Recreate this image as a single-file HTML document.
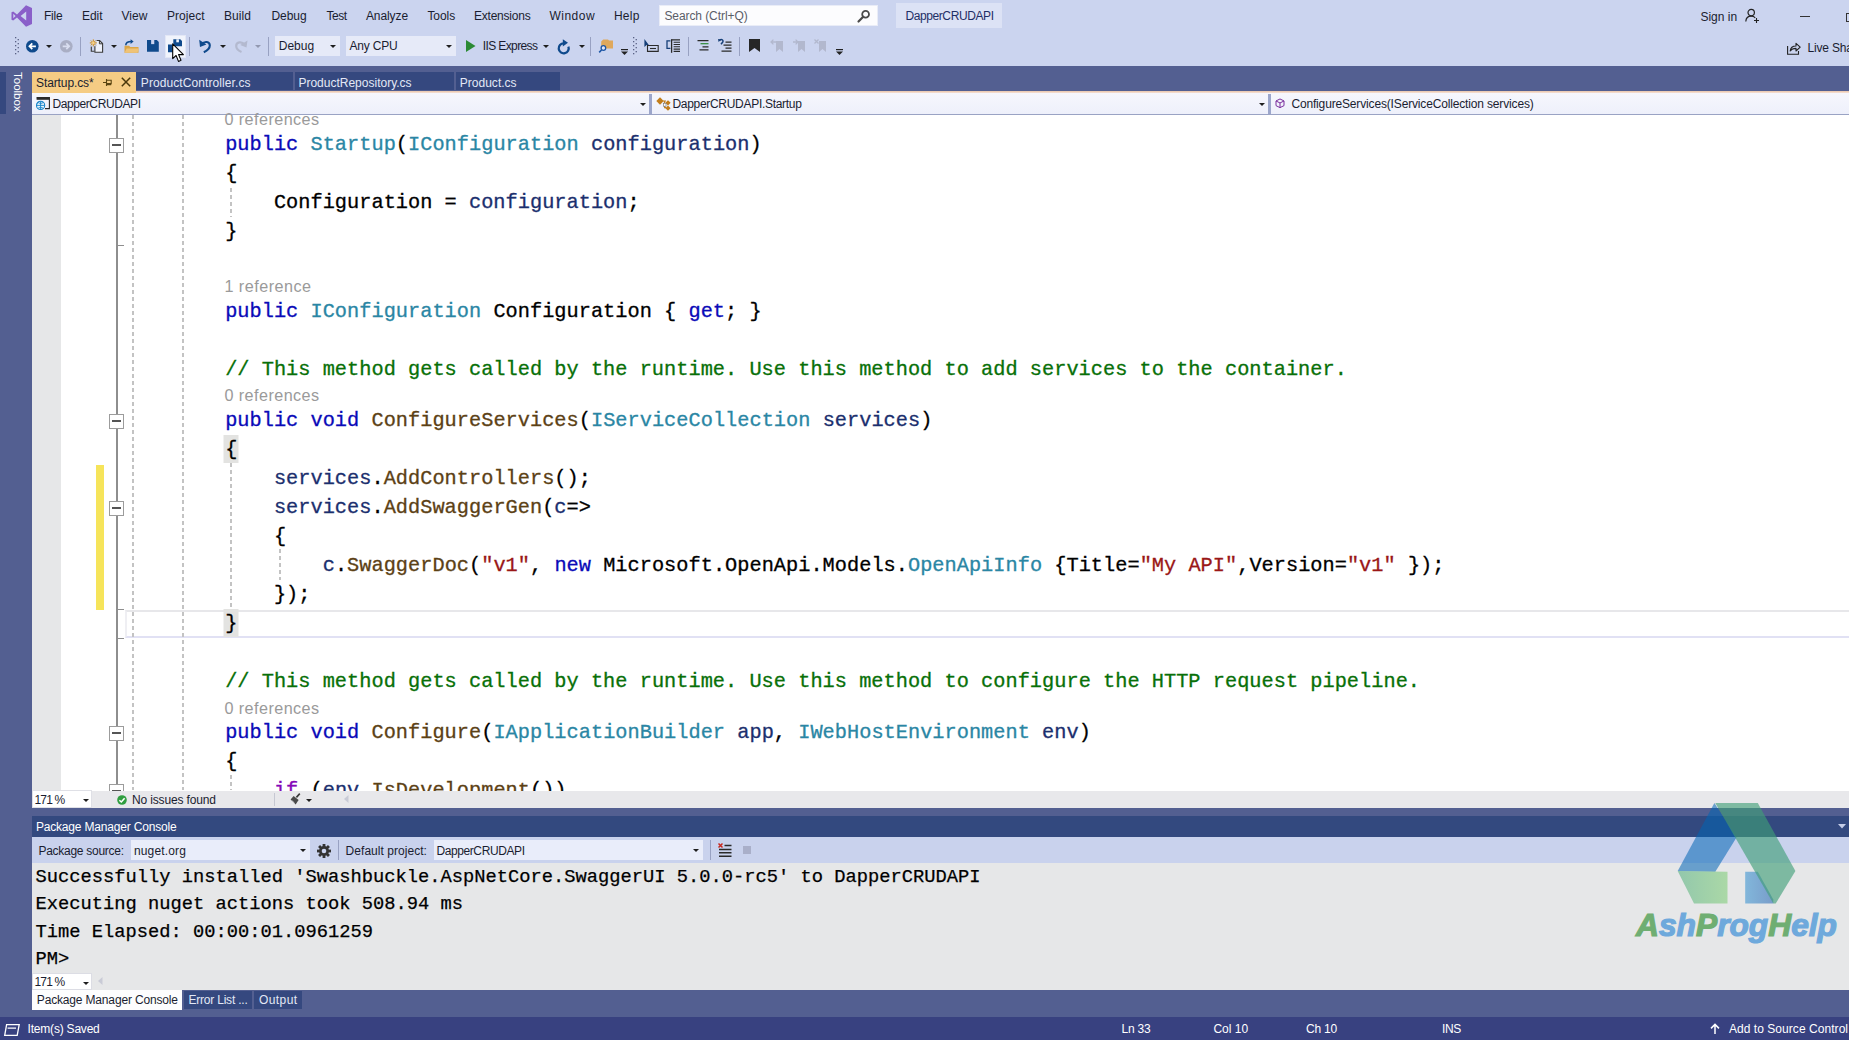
<!DOCTYPE html>
<html lang="en">
<head>
<meta charset="utf-8">
<title>DapperCRUDAPI - Microsoft Visual Studio</title>
<style>
*{box-sizing:border-box;margin:0;padding:0}
html,body{width:1849px;height:1040px;overflow:hidden;background:#535f91}
body{position:relative;font-family:"Liberation Sans",sans-serif;font-size:12px;color:#1e1e1e}
.a,.t,.code,.con{position:absolute}
.t{white-space:pre;line-height:16px;height:16px}
svg{position:absolute;overflow:visible}
#chrome{left:0;top:0;width:1849px;height:66px;background:#cbd4ef}
#search{left:659px;top:5px;width:219px;height:21px;background:#fcfcfe;border:1px solid #e9ecf7}
#sln{left:896px;top:3px;width:106px;height:25px;background:#dce2f5}
.combo{top:36px;height:20px;background:#e6eaf8}
.sep{width:1px;background:#98a1c2}
.arr{width:0;height:0;border-left:3px solid transparent;border-right:3px solid transparent;border-top:3px solid #1e1e1e}
#tabs{left:0;top:66px;width:1849px;height:25px;background:#535f91}
.tab{top:72px;height:18px;background:#35487f}
#nav{left:32px;top:93px;width:1817px;height:22px;background:linear-gradient(#f6f7fd,#eef0fb);border-bottom:1px solid #9aa3c4}
#editor{left:32px;top:115px;width:1817px;height:676px;background:#fff;overflow:hidden}
#gutter{left:0;top:0;width:29px;height:675px;background:#e6e7e8}
.code{white-space:pre;font-family:"Liberation Mono",monospace;font-size:20.3px;line-height:29px;height:29px;color:#000;-webkit-text-stroke:0.3px currentColor}
.con{white-space:pre;font-family:"Liberation Mono",monospace;font-size:18.75px;line-height:27px;height:27px;color:#000;-webkit-text-stroke:0.25px currentColor}
.k{color:#0a0ab8}.ty{color:#2a86a4}.m{color:#5c4115}.p{color:#1b2f6e}.c{color:#087008}.s{color:#9a1717}.ck{color:#8508b8}
.br{display:inline-block;height:28px;vertical-align:top;background:#e3e3e1;box-shadow:-1.5px 0 0 #e3e3e1,1.5px 0 0 #e3e3e1}
.guide{width:1.6px;background:repeating-linear-gradient(#c3c3c3 0,#c3c3c3 4px,transparent 4px,transparent 7px)}
.fold{width:15px;height:15px;border:1px solid #9c9c9c;background:#fff}
.fold:after{content:"";position:absolute;left:2px;top:5.5px;width:9px;height:2px;background:#555}
.tick{height:1.4px;width:7px;background:#8e8e8e}
</style>
</head>
<body>

<div class="a" id="chrome"></div>
<svg style="left:11px;top:5px" width="21" height="22" viewBox="0 0 21 22"><path fill="#8a5fc9" fill-rule="evenodd" d="M15 0.3 L21 3 V19 L15 21.7 L6 12.6 L2.2 15.6 L0.5 14.7 V7.3 L2.2 6.4 L6 9.4 Z M15.2 6.6 L9.6 11 L15.2 15.4 Z M2.3 8.8 V13.2 L4.6 11 Z"/></svg>
<div class="a" id="search"></div>
<svg style="left:857px;top:9px" width="14" height="14" viewBox="0 0 14 14"><circle cx="8.6" cy="5.2" r="3.4" fill="none" stroke="#4a4a4a" stroke-width="1.8"/><path d="M6.2 7.8 L1.5 12.5" stroke="#4a4a4a" stroke-width="2.2" stroke-linecap="round"/></svg>
<div class="a" id="sln"></div>
<svg style="left:1745px;top:8px" width="16" height="16" viewBox="0 0 16 16"><circle cx="6.2" cy="4.6" r="3.2" fill="none" stroke="#222" stroke-width="1.2"/><path d="M0.8 13.5 C1 9.5 3.5 8.2 6.2 8.2 C8 8.2 9.4 8.8 10.2 9.8" fill="none" stroke="#222" stroke-width="1.2"/><path d="M9 12.5 H14 M11.5 10 V15" stroke="#222" stroke-width="1.1"/></svg>
<div class="a" style="left:1800px;top:16px;width:10px;height:1px;background:#333"></div>
<div class="a" style="left:1846px;top:13px;width:8px;height:9px;border:1px solid #333"></div>
<svg style="left:1787px;top:42px" width="14" height="13" viewBox="0 0 14 13"><path d="M0.6 4 V12.3 H11.5 V9" fill="none" stroke="#222" stroke-width="1.1"/><path d="M3.2 9 C3.6 5.6 6 4 9 4 V1.4 L13.2 5.2 L9 9 V6.4 C6.6 6.4 4.6 7 3.2 9 Z" fill="none" stroke="#222" stroke-width="1.1" stroke-linejoin="round"/></svg>
<svg style="left:14.5px;top:37px" width="5" height="18" viewBox="0 0 5 18" fill="#596184"><rect x="0" y="0.0" width="1.3" height="1.3"/><rect x="2.6" y="2.0" width="1.3" height="1.3"/><rect x="0" y="4.0" width="1.3" height="1.3"/><rect x="2.6" y="6.0" width="1.3" height="1.3"/><rect x="0" y="8.0" width="1.3" height="1.3"/><rect x="2.6" y="10.0" width="1.3" height="1.3"/><rect x="0" y="12.0" width="1.3" height="1.3"/><rect x="2.6" y="14.0" width="1.3" height="1.3"/><rect x="0" y="16.0" width="1.3" height="1.3"/></svg>
<svg style="left:25.7px;top:40px" width="12.6" height="12.6" viewBox="0 0 14 14"><circle cx="7" cy="7" r="7" fill="#0f4a8c"/><path d="M11 7 H4.2 M7 3.8 L3.8 7 L7 10.2" fill="none" stroke="#fff" stroke-width="1.9"/></svg>
<div class="a arr" style="left:46px;top:45px"></div>
<svg style="left:59.7px;top:40px" width="12.6" height="12.6" viewBox="0 0 14 14"><circle cx="7" cy="7" r="7" fill="#a9aec4"/><path d="M3 7 H9.8 M7 3.8 L10.2 7 L7 10.2" fill="none" stroke="#d9def0" stroke-width="1.9"/></svg>
<div class="a sep" style="left:80px;top:37px;height:19px"></div>
<svg style="left:89px;top:39px" width="15" height="14" viewBox="0 0 15 14"><path d="M2.3 7.5 V12.3 H5.6" fill="none" stroke="#3a3a3a" stroke-width="1.1"/><path d="M5.9 1.5 H10.6 L13.6 4.5 V13.3 H5.9 Z" fill="#eef1fb" stroke="#3a3a3a" stroke-width="1.1"/><path d="M10.4 1.6 V4.8 H13.5" fill="none" stroke="#3a3a3a" stroke-width="1"/><rect x="1.2" y="0.6" width="6.4" height="6.6" fill="#cbd4ef"/><path d="M4.3 0.4 V7.4 M0.8 3.9 H7.8 M1.9 1.5 L6.7 6.3 M6.7 1.5 L1.9 6.3" stroke="#d58d12" stroke-width="1"/><circle cx="4.3" cy="3.9" r="1.3" fill="#f7d48a"/></svg>
<div class="a arr" style="left:111.3px;top:45px"></div>
<svg style="left:123.5px;top:38.5px" width="15" height="14" viewBox="0 0 15 14"><path d="M0.5 6.8 H5 L6.3 8 H14.5 V13.8 H0.5 Z" fill="#dca646"/><path d="M0.5 13.8 L2.6 9.6 H15 L13.4 13.8 Z" fill="#efc377"/><path d="M1.8 6.3 C1.8 3.4 4 2.6 7.6 2.6" fill="none" stroke="#0f4a8c" stroke-width="1.5"/><path d="M6.6 0.3 L9.6 2.6 L6.6 4.9 Z" fill="#0f4a8c"/></svg>
<svg style="left:147.4px;top:40px" width="11.8" height="11.8" viewBox="0 0 12 12"><path d="M0 0 H10 L12 2 V12 H0 Z" fill="#0f4a8c"/><rect x="4.2" y="0" width="3.2" height="4.2" fill="#cbd4ef"/></svg>
<div class="a" style="left:164.7px;top:34.5px;width:21.3px;height:23px;background:#f1f4fc;border:1px solid #e3e7f6"></div>
<svg style="left:168px;top:39px" width="15" height="14" viewBox="0 0 15 14"><path d="M5.3 0.3 H12.3 L14 2 V7.3 H5.3 Z" fill="#0f4a8c"/><rect x="8.3" y="0.3" width="2.6" height="3" fill="#f1f4fc"/><path d="M0 5.6 H4.4 V8.6 H6 V13.3 H0 Z" fill="#0f4a8c"/></svg>
<div class="a sep" style="left:189px;top:37px;height:19px"></div>
<svg style="left:198.5px;top:38.6px" width="13" height="14" viewBox="0 0 13 14"><path d="M3 5.2 C5.4 1.8 10.8 2.4 10.8 6.6 C10.8 9.6 8.4 11.6 4.8 13.2" fill="none" stroke="#0f4a8c" stroke-width="2.1"/><path d="M0.2 0.8 L1 8 L7.4 5.4 Z" fill="#0f4a8c"/></svg>
<div class="a arr" style="left:220.2px;top:45px"></div>
<svg style="left:233px;top:39px" width="15" height="14" viewBox="0 0 15 14"><path d="M11.5 5.5 C9 2.2 3.2 2.6 3.2 7 C3.2 9.8 5.4 11.6 8.5 13" fill="none" stroke="#b3b9cf" stroke-width="2.2"/><path d="M14.5 1.5 L13.5 8.5 L7.2 6 Z" fill="#b3b9cf"/></svg>
<div class="a arr" style="left:255.2px;top:45px;border-top-color:#9298b0"></div>
<div class="a sep" style="left:267.5px;top:37px;height:19px"></div>
<div class="a combo" style="left:275px;width:65px"></div>
<div class="a arr" style="left:330px;top:45px"></div>
<div class="a combo" style="left:346px;width:110px"></div>
<div class="a arr" style="left:446px;top:45px"></div>
<svg style="left:466px;top:40px" width="10" height="12" viewBox="0 0 10 12"><path d="M0 0 L9.5 6 L0 12 Z" fill="#2b8a34"/></svg>
<div class="a arr" style="left:542.5px;top:45px"></div>
<svg style="left:557px;top:38px" width="14" height="17" viewBox="0 0 14 17"><path d="M6.7 5.3 A5 5 0 1 0 11.4 8.6" fill="none" stroke="#0f4a8c" stroke-width="2.3"/><path d="M5.8 1.2 L11 4.8 L5.8 8.6 Z" fill="#0f4a8c"/></svg>
<div class="a arr" style="left:578.5px;top:45px"></div>
<div class="a sep" style="left:590px;top:37px;height:19px"></div>
<svg style="left:598px;top:38px" width="16" height="15" viewBox="0 0 16 15"><path d="M5.2 1.4 H10 L11 2.6 H15 V10.4 H3.2 V3.4 Z" fill="#dfa85c"/><circle cx="5.4" cy="10" r="2.3" fill="#dfe6f8" stroke="#1b55a5" stroke-width="1.3"/><path d="M3.7 11.8 L1.2 14.4" stroke="#1b55a5" stroke-width="1.6"/></svg>
<svg style="left:620.5px;top:48.5px" width="7" height="6" viewBox="0 0 7 6"><rect x="0" y="0" width="7" height="1.2" fill="#222"/><path d="M0 2.6 H7 L3.5 6 Z" fill="#222"/></svg>
<svg style="left:632.6px;top:37px" width="5" height="18" viewBox="0 0 5 18" fill="#596184"><rect x="0" y="0.0" width="1.3" height="1.3"/><rect x="2.6" y="2.0" width="1.3" height="1.3"/><rect x="0" y="4.0" width="1.3" height="1.3"/><rect x="2.6" y="6.0" width="1.3" height="1.3"/><rect x="0" y="8.0" width="1.3" height="1.3"/><rect x="2.6" y="10.0" width="1.3" height="1.3"/><rect x="0" y="12.0" width="1.3" height="1.3"/><rect x="2.6" y="14.0" width="1.3" height="1.3"/><rect x="0" y="16.0" width="1.3" height="1.3"/></svg>
<svg style="left:644px;top:39px" width="15" height="13" viewBox="0 0 15 13"><path d="M0.4 0 L0.4 8 L2.6 6 L5 6.3 Z" fill="#163f78"/><path d="M3.5 6.5 H14.2 V12.4 H3.5 Z" fill="none" stroke="#2a2a2a" stroke-width="1.1"/><path d="M6 9.5 H12" stroke="#2a2a2a" stroke-width="1.1"/></svg>
<svg style="left:666px;top:39px" width="15" height="14" viewBox="0 0 15 14"><path d="M4.4 1.8 H1 V9.4 H4.4" fill="none" stroke="#163f78" stroke-width="1.3"/><path d="M5.6 0.2 V13.8" stroke="#2a2a2a" stroke-width="1.3"/><path d="M5.6 0.9 H14 M7.6 3.2 H14 M7.6 5.5 H14 M7.6 7.8 H14 M7.6 10.1 H14 M7.6 12.4 H14" stroke="#2a2a2a" stroke-width="1.1"/></svg>
<div class="a sep" style="left:688px;top:37px;height:19px"></div>
<svg style="left:697px;top:40px" width="12" height="11" viewBox="0 0 12 11"><path d="M0.5 0.6 H11.5 M5.5 6.8 H11.5 M2.5 9.9 H11.5" stroke="#2a2a2a" stroke-width="1.2"/><path d="M3.5 3.7 H11.5" stroke="#2b8a34" stroke-width="1.2"/></svg>
<svg style="left:718px;top:39px" width="14" height="13" viewBox="0 0 14 13"><path d="M1.5 1.5 C3.5 -0.5 6 1.2 4.6 3.2 L3 5.2" fill="none" stroke="#163f78" stroke-width="1.5"/><path d="M0 0 L3.2 0.4 L0.6 3 Z" fill="#163f78"/><path d="M7.5 3.2 H13.5 M5.5 6.2 H13.5 M7.5 9.2 H13.5 M3.5 12.2 H13.5" stroke="#2a2a2a" stroke-width="1.2"/></svg>
<div class="a sep" style="left:739.3px;top:37px;height:19px"></div>
<svg style="left:749px;top:39px" width="11" height="13" viewBox="0 0 11 13"><path d="M0 0 H11 V13 L5.5 9 L0 13 Z" fill="#262626"/></svg>
<svg style="left:771px;top:39px" width="13" height="13" viewBox="0 0 13 13"><path d="M5 2 H12 V13 L8.5 10 L5 13 Z" fill="#b2b8ce"/><path d="M0 3 H5 M2.4 0.6 L0 3 L2.4 5.4" stroke="#b2b8ce" stroke-width="1.3" fill="none"/></svg>
<svg style="left:793px;top:39px" width="13" height="13" viewBox="0 0 13 13"><path d="M5 2 H12 V13 L8.5 10 L5 13 Z" fill="#b2b8ce"/><path d="M0 3 H5 M2.6 0.6 L5 3 L2.6 5.4" stroke="#b2b8ce" stroke-width="1.3" fill="none"/></svg>
<svg style="left:814px;top:39px" width="13" height="13" viewBox="0 0 13 13"><path d="M5 2 H12 V13 L8.5 10 L5 13 Z" fill="#b2b8ce"/><path d="M0.5 0.5 L4.5 4.5 M4.5 0.5 L0.5 4.5" stroke="#b2b8ce" stroke-width="1.3" fill="none"/></svg>
<svg style="left:835.5px;top:48.5px" width="7" height="6" viewBox="0 0 7 6"><rect x="0" y="0" width="7" height="1.2" fill="#222"/><path d="M0 2.6 H7 L3.5 6 Z" fill="#222"/></svg>
<div class="a" id="tabs"></div>
<div class="a" style="left:32px;top:90.5px;width:1817px;height:3.5px;background:linear-gradient(#e9c4a8,#f3ddd0 55%,#f5eeeb)"></div>
<div class="a" style="left:32px;top:72px;width:104px;height:21px;background:#f5cc84"></div>
<div class="a tab" style="left:136px;width:157px"></div>
<div class="a tab" style="left:295px;width:159px"></div>
<div class="a tab" style="left:456px;width:103.5px"></div>
<svg style="left:103px;top:78px" width="9" height="9" viewBox="0 0 9 9"><path d="M0 4.5 H3.5 M3.5 1 V8 M3.5 2.2 H8.2 V5.6 H3.5 M3.5 6.6 H8.2" fill="none" stroke="#5a4410" stroke-width="1.1"/></svg>
<svg style="left:121px;top:77px" width="10" height="10" viewBox="0 0 10 10"><path d="M0.8 0.8 L9.2 9.2 M9.2 0.8 L0.8 9.2" stroke="#4a380c" stroke-width="1.5"/></svg>
<div class="a" style="left:0;top:72px;width:6px;height:42px;background:#35487f"></div>
<div class="a" style="left:9.5px;top:72px;width:16px;height:44px;writing-mode:vertical-rl;color:#fff;font-size:11.6px;line-height:16px;white-space:pre;letter-spacing:-0.05px">Toolbox</div>
<div class="a" id="nav"></div>
<div class="a" style="left:649px;top:94px;width:2.8px;height:20px;background:#9ca6cb"></div>
<div class="a" style="left:1268.2px;top:94px;width:2.8px;height:20px;background:#9ca6cb"></div>
<div class="a arr" style="left:640px;top:103px"></div>
<div class="a arr" style="left:1259px;top:103px"></div>
<svg style="left:36px;top:97px" width="14" height="13" viewBox="0 0 14 13"><path d="M0.6 0.6 H13.4 V11.6 H9" fill="none" stroke="#2a2a2a" stroke-width="1.1"/><rect x="0.6" y="0.6" width="12.8" height="2.2" fill="#2a2a2a"/><circle cx="4.6" cy="8.4" r="4.1" fill="#e8f4fc" stroke="#1583c9" stroke-width="1.1"/><path d="M0.6 8.4 H8.6 M4.6 4.4 V12.4 M2.2 5.6 C3.6 6.6 5.6 6.6 7 5.6 M2.2 11.2 C3.6 10.2 5.6 10.2 7 11.2" fill="none" stroke="#1583c9" stroke-width="0.9"/></svg>
<svg style="left:656px;top:97px" width="15" height="14" viewBox="0 0 15 14"><path d="M4 0.3 L7.7 4 L4 7.7 L0.3 4 Z" fill="#c27d1a"/><path d="M7 4 H10 M8.6 4 V10.6 H10" fill="none" stroke="#c27d1a" stroke-width="1.1"/><path d="M12 3.2 L14.6 5.8 L12 8.4 L9.4 5.8 Z M12 8.6 L14.6 11.2 L12 13.8 L9.4 11.2 Z" fill="#c27d1a"/><rect x="7.4" y="6.2" width="2.6" height="3" fill="#fff" stroke="#6a6a6a" stroke-width="0.6"/></svg>
<svg style="left:1274.6px;top:97.6px" width="10" height="10.6" viewBox="0 0 12 12"><path d="M6 0.8 L10.8 3.2 V8.8 L6 11.2 L1.2 8.8 V3.2 Z M1.2 3.2 L6 5.6 L10.8 3.2 M6 5.6 V11.2" fill="none" stroke="#7b2f9e" stroke-width="1.2" stroke-linejoin="round"/></svg>
<div class="a" id="editor"><div class="a" id="gutter"></div></div>
<div class="a" style="left:125px;top:609.5px;width:1730px;height:28px;border-top:2px solid #e7e7ea;border-bottom:2.4px solid #e1e1f4;border-left:2px solid #efeff3"></div>
<div class="a" style="left:96px;top:465px;width:8px;height:144.7px;background:#f6e45a"></div>
<div class="a" style="left:116px;top:115px;width:1.6px;height:675px;background:#8e8e8e"></div>
<div class="a guide" style="left:132px;top:115px;height:675px"></div>
<div class="a guide" style="left:182px;top:115px;height:675px"></div>
<div class="a guide" style="left:230px;top:188px;height:29px"></div>
<div class="a guide" style="left:230px;top:463px;height:146px"></div>
<div class="a guide" style="left:279px;top:549px;height:31px"></div>
<div class="a guide" style="left:230px;top:775px;height:15px"></div>
<div class="a fold" style="left:109px;top:137.5px"></div>
<div class="a fold" style="left:109px;top:413.5px"></div>
<div class="a fold" style="left:109px;top:500.5px"></div>
<div class="a fold" style="left:109px;top:725.5px"></div>
<div class="a fold" style="left:109px;top:783.5px"></div>
<div class="a tick" style="left:117px;top:244.5px"></div>
<div class="a tick" style="left:117px;top:609px"></div>
<div class="a tick" style="left:117px;top:637.6px"></div>
<div class="code" id="c149" style="left:225.14px;top:130.1px;letter-spacing:0.0215px"><span class="k">public</span> <span class="ty">Startup</span>(<span class="ty">IConfiguration</span> <span class="p">configuration</span>)</div>
<div class="code" id="c178" style="left:225.14px;top:159.1px;letter-spacing:0.0211px">{</div>
<div class="code" id="c207" style="left:273.92px;top:188.1px;letter-spacing:0.0216px">Configuration = <span class="p">configuration</span>;</div>
<div class="code" id="c236" style="left:225.14px;top:217.1px;letter-spacing:0.0211px">}</div>
<div class="code" id="c316" style="left:225.14px;top:297.1px;letter-spacing:0.0218px"><span class="k">public</span> <span class="ty">IConfiguration</span> Configuration { <span class="k">get</span>; }</div>
<div class="code" id="c374" style="left:225.14px;top:355.1px;letter-spacing:0.0221px"><span class="c">// This method gets called by the runtime. Use this method to add services to the container.</span></div>
<div class="code" id="c425" style="left:225.14px;top:406.1px;letter-spacing:0.0217px"><span class="k">public</span> <span class="k">void</span> <span class="m">ConfigureServices</span>(<span class="ty">IServiceCollection</span> <span class="p">services</span>)</div>
<div class="code" id="c454" style="left:225.14px;top:435.1px;letter-spacing:0.0211px"><span class="br">{</span></div>
<div class="code" id="c483" style="left:273.92px;top:464.1px;letter-spacing:0.0217px"><span class="p">services</span>.<span class="m">AddControllers</span>();</div>
<div class="code" id="c512" style="left:273.92px;top:493.1px;letter-spacing:0.0211px"><span class="p">services</span>.<span class="m">AddSwaggerGen</span>(<span class="p">c</span>=&gt;</div>
<div class="code" id="c541" style="left:273.92px;top:522.1px;letter-spacing:0.0211px">{</div>
<div class="code" id="c570" style="left:322.69px;top:551.1px;letter-spacing:0.0213px"><span class="p">c</span>.<span class="m">SwaggerDoc</span>(<span class="s">&quot;v1&quot;</span>, <span class="k">new</span> Microsoft.OpenApi.Models.<span class="ty">OpenApiInfo</span> {Title=<span class="s">&quot;My API&quot;</span>,Version=<span class="s">&quot;v1&quot;</span> });</div>
<div class="code" id="c599" style="left:273.92px;top:580.1px;letter-spacing:0.0211px">});</div>
<div class="code" id="c628" style="left:225.14px;top:609.1px;letter-spacing:0.0211px"><span class="br">}</span></div>
<div class="code" id="c686" style="left:225.14px;top:667.1px;letter-spacing:0.0222px"><span class="c">// This method gets called by the runtime. Use this method to configure the HTTP request pipeline.</span></div>
<div class="code" id="c737" style="left:225.14px;top:718.1px;letter-spacing:0.0216px"><span class="k">public</span> <span class="k">void</span> <span class="m">Configure</span>(<span class="ty">IApplicationBuilder</span> <span class="p">app</span>, <span class="ty">IWebHostEnvironment</span> <span class="p">env</span>)</div>
<div class="code" id="c766" style="left:225.14px;top:747.1px;letter-spacing:0.0211px">{</div>
<div class="code" id="c795" style="left:273.92px;top:776.1px;letter-spacing:0.0211px"><span class="ck">if</span> (<span class="p">env</span>.<span class="m">IsDevelopment</span>())</div>
<div class="a" style="left:32px;top:790.5px;width:1817px;height:17.5px;background:#e8e8eb"></div>
<div class="a" style="left:32px;top:790px;width:60px;height:18px;background:#fff;border:1px solid #dfe0e6"></div>
<div class="a arr" style="left:83px;top:799px"></div>
<svg style="left:117px;top:795px" width="10" height="10" viewBox="0 0 10 10"><circle cx="5" cy="5" r="4.8" fill="#2f9e3f"/><path d="M2.4 5.2 L4.3 7 L7.6 3.2" fill="none" stroke="#fff" stroke-width="1.5"/></svg>
<div class="a sep" style="left:274px;top:793px;height:13px;background:#c6c8d2"></div>
<svg style="left:290px;top:793px" width="11" height="12" viewBox="0 0 11 12"><path d="M9.8 0.6 L6.4 4.4" stroke="#3a3a3a" stroke-width="1.6"/><path d="M3.6 3 L8.6 7 L5.6 11.4 L0.6 6.6 Z" fill="#4a4a4a"/><path d="M2.2 7.8 L4.6 10.2" stroke="#e9eaee" stroke-width="0.8"/></svg>
<div class="a arr" style="left:306px;top:799px"></div>
<svg style="left:344px;top:795px" width="5" height="8" viewBox="0 0 5 8"><path d="M4.5 0 V8 L0 4 Z" fill="#c9cbd6"/></svg>
<div class="a" style="left:32px;top:816px;width:1817px;height:21px;background:#33497f"></div>
<svg style="left:1838px;top:824px" width="8" height="5" viewBox="0 0 8 5"><path d="M0 0 H8 L4 4.5 Z" fill="#c5cde8"/></svg>
<div class="a" style="left:32px;top:837px;width:1817px;height:26px;background:#c9d2ed"></div>
<div class="a" style="left:130.5px;top:840px;width:179px;height:20px;background:#e9edfa"></div>
<div class="a arr" style="left:300px;top:849px"></div>
<svg style="left:317px;top:843.5px" width="14" height="14" viewBox="0 0 14 14"><g transform="translate(7,7)"><g fill="#333"><rect x="-1.4" y="-7" width="2.8" height="14" transform="rotate(0)"/><rect x="-1.4" y="-7" width="2.8" height="14" transform="rotate(45)"/><rect x="-1.4" y="-7" width="2.8" height="14" transform="rotate(90)"/><rect x="-1.4" y="-7" width="2.8" height="14" transform="rotate(135)"/></g><circle r="4.9" fill="#333"/><circle r="2.3" fill="#cbd4ef"/></g></svg>
<div class="a sep" style="left:338px;top:840px;height:20px"></div>
<div class="a" style="left:433.5px;top:840px;width:269px;height:20px;background:#e9edfa"></div>
<div class="a arr" style="left:693px;top:849px"></div>
<div class="a sep" style="left:709.5px;top:840px;height:20px"></div>
<svg style="left:718px;top:843px" width="14" height="14" viewBox="0 0 14 14"><path d="M0.5 0.5 L4.5 4.5 M4.5 0.5 L0.5 4.5" stroke="#c8281e" stroke-width="1.5"/><path d="M6.5 2.6 H13.5 M1 6.4 H13.5 M1 9.8 H13.5 M1 13.2 H13.5" stroke="#2a2a2a" stroke-width="1.5"/></svg>
<div class="a" style="left:743px;top:846px;width:8px;height:8px;background:#a9afc9"></div>
<div class="a" style="left:32px;top:863px;width:1817px;height:127px;background:#e6e7e8"></div>
<div class="con" id="n882" style="left:35.5px;top:864.3px;letter-spacing:-0.0019px">Successfully installed &#x27;Swashbuckle.AspNetCore.SwaggerUI 5.0.0-rc5&#x27; to DapperCRUDAPI</div>
<div class="con" id="n909" style="left:35.5px;top:891.1px;letter-spacing:-0.0021px">Executing nuget actions took 508.94 ms</div>
<div class="con" id="n937" style="left:35.5px;top:918.5px;letter-spacing:-0.0021px">Time Elapsed: 00:00:01.0961259</div>
<div class="con" id="n964" style="left:35.5px;top:945.9px;letter-spacing:-0.0052px">PM&gt;</div>
<div class="a" style="left:32px;top:973px;width:60px;height:17px;background:#fff;border:1px solid #dcdde4"></div>
<div class="a arr" style="left:83px;top:981.5px"></div>
<svg style="left:97.5px;top:977px" width="5" height="8" viewBox="0 0 5 8"><path d="M4.5 0 V8 L0 4 Z" fill="#c9cbd6"/></svg>
<div class="a" style="left:32px;top:990px;width:150px;height:20px;background:#fdfdfe"></div>
<div class="a" style="left:184px;top:991px;width:67.5px;height:18px;background:#35487f"></div>
<div class="a" style="left:254px;top:991px;width:48px;height:18px;background:#35487f"></div>
<div class="a" style="left:0;top:1017px;width:1849px;height:23px;background:#384180"></div>
<svg style="left:4px;top:1023.5px" width="16" height="12" viewBox="0 0 16 12"><path d="M2.6 0.7 H15.2 L13.2 11.3 H0.7 Z M3.6 4.2 H12" fill="none" stroke="#fff" stroke-width="1.3"/></svg>
<svg style="left:1710px;top:1023px" width="10" height="11" viewBox="0 0 10 11"><path d="M5 11 V1.6 M1 5.4 L5 1.4 L9 5.4" fill="none" stroke="#fff" stroke-width="1.5"/></svg>
<svg style="left:0;top:0" width="1849" height="1040" viewBox="0 0 1849 1040"><defs><linearGradient id="g1" x1="0" x2="1"><stop offset="0" stop-color="#5fb487"/><stop offset="1" stop-color="#86cf7e"/></linearGradient><linearGradient id="g2" x1="0" x2="1"><stop offset="0" stop-color="#2f8fd0"/><stop offset="1" stop-color="#1f5fb0"/></linearGradient></defs><polygon points="1714.4,803.1 1736.5,837.4 1715.3,871.7 1677.7,870.9" fill="#0064b4" fill-opacity="0.55"/><polygon points="1677.7,870.9 1727.5,871.7 1727.5,903.6 1694,903.6" fill="url(#g1)" fill-opacity="0.62"/><polygon points="1745.2,871.7 1757.8,871.7 1773.3,899.5 1773.3,903.6 1745.2,903.6" fill="url(#g2)" fill-opacity="0.55"/><polygon points="1715.3,803.1 1757.8,803.1 1795.4,870.9 1775.7,903.6 1773.3,903.6" fill="#3f9e76" fill-opacity="0.63"/><text x="1636" y="935.5" font-family="'Liberation Sans',sans-serif" font-weight="bold" font-style="italic" font-size="31" textLength="201" lengthAdjust="spacingAndGlyphs" stroke-width="1.2" paint-order="stroke"><tspan fill="#6fae72" stroke="#6fae72">A</tspan><tspan fill="#6ea9dc" stroke="#6ea9dc">sh</tspan><tspan fill="#6fae72" stroke="#6fae72">P</tspan><tspan fill="#6ea9dc" stroke="#6ea9dc">rog</tspan><tspan fill="#6fae72" stroke="#6fae72">H</tspan><tspan fill="#6ea9dc" stroke="#6ea9dc">elp</tspan></text></svg>
<div class="t" id="t0" style="left:43.90px;top:7.84px;font-size:12px;line-height:16px;height:16px;color:#1a1d30;letter-spacing:-0.1609px;">File</div>
<div class="t" id="t1" style="left:81.90px;top:7.84px;font-size:12px;line-height:16px;height:16px;color:#1a1d30;letter-spacing:0.0031px;">Edit</div>
<div class="t" id="t2" style="left:121.40px;top:7.84px;font-size:12px;line-height:16px;height:16px;color:#1a1d30;letter-spacing:0.1008px;">View</div>
<div class="t" id="t3" style="left:166.90px;top:7.84px;font-size:12px;line-height:16px;height:16px;color:#1a1d30;letter-spacing:0.0487px;">Project</div>
<div class="t" id="t4" style="left:223.90px;top:7.84px;font-size:12px;line-height:16px;height:16px;color:#1a1d30;letter-spacing:0.1025px;">Build</div>
<div class="t" id="t5" style="left:271.40px;top:7.84px;font-size:12px;line-height:16px;height:16px;color:#1a1d30;letter-spacing:-0.0350px;">Debug</div>
<div class="t" id="t6" style="left:326.40px;top:7.84px;font-size:12px;line-height:16px;height:16px;color:#1a1d30;letter-spacing:-0.4539px;">Test</div>
<div class="t" id="t7" style="left:365.90px;top:7.84px;font-size:12px;line-height:16px;height:16px;color:#1a1d30;letter-spacing:-0.0719px;">Analyze</div>
<div class="t" id="t8" style="left:427.40px;top:7.84px;font-size:12px;line-height:16px;height:16px;color:#1a1d30;letter-spacing:-0.0631px;">Tools</div>
<div class="t" id="t9" style="left:473.90px;top:7.84px;font-size:12px;line-height:16px;height:16px;color:#1a1d30;letter-spacing:-0.2003px;">Extensions</div>
<div class="t" id="t10" style="left:549.40px;top:7.84px;font-size:12px;line-height:16px;height:16px;color:#1a1d30;letter-spacing:0.5021px;">Window</div>
<div class="t" id="t11" style="left:613.90px;top:7.84px;font-size:12px;line-height:16px;height:16px;color:#1a1d30;letter-spacing:0.2531px;">Help</div>
<div class="t" id="t12" style="left:664.40px;top:7.84px;font-size:12px;line-height:16px;height:16px;color:#5a5d68;letter-spacing:-0.0773px;">Search (Ctrl+Q)</div>
<div class="t" id="t13" style="left:905.40px;top:7.84px;font-size:12px;line-height:16px;height:16px;color:#1f2f66;letter-spacing:-0.3981px;">DapperCRUDAPI</div>
<div class="t" id="t14" style="left:1700.40px;top:8.84px;font-size:12px;line-height:16px;height:16px;color:#1a1d30;letter-spacing:-0.0004px;">Sign in</div>
<div class="t" id="t15" style="left:1807.40px;top:40.24px;font-size:12px;line-height:16px;height:16px;color:#1a1d30;letter-spacing:-0.1675px;">Live Share</div>
<div class="t" id="t16" style="left:278.70px;top:37.84px;font-size:12px;line-height:16px;height:16px;color:#1a1d30;letter-spacing:0.0450px;">Debug</div>
<div class="t" id="t17" style="left:349.40px;top:37.84px;font-size:12px;line-height:16px;height:16px;color:#1a1d30;letter-spacing:-0.1656px;">Any CPU</div>
<div class="t" id="t18" style="left:482.80px;top:37.84px;font-size:12px;line-height:16px;height:16px;color:#1a1d30;letter-spacing:-0.6145px;">IIS Express</div>
<div class="t" id="t19" style="left:36.00px;top:75.14px;font-size:12px;line-height:16px;height:16px;color:#1a1d30;letter-spacing:-0.1003px;">Startup.cs*</div>
<div class="t" id="t20" style="left:140.80px;top:74.84px;font-size:12px;line-height:16px;height:16px;color:#e3e8f6;letter-spacing:0.0877px;">ProductController.cs</div>
<div class="t" id="t21" style="left:298.40px;top:74.84px;font-size:12px;line-height:16px;height:16px;color:#e3e8f6;letter-spacing:0.0022px;">ProductRepository.cs</div>
<div class="t" id="t22" style="left:459.80px;top:74.84px;font-size:12px;line-height:16px;height:16px;color:#e3e8f6;letter-spacing:0.0097px;">Product.cs</div>
<div class="t" id="t23" style="left:52.40px;top:95.84px;font-size:12px;line-height:16px;height:16px;color:#1a1d30;letter-spacing:-0.3981px;">DapperCRUDAPI</div>
<div class="t" id="t24" style="left:672.40px;top:95.84px;font-size:12px;line-height:16px;height:16px;color:#1a1d30;letter-spacing:-0.2948px;">DapperCRUDAPI.Startup</div>
<div class="t" id="t25" style="left:1291.40px;top:95.84px;font-size:12px;line-height:16px;height:16px;color:#1a1d30;letter-spacing:-0.1570px;">ConfigureServices(IServiceCollection services)</div>
<div class="t" id="t26" style="left:34.40px;top:791.84px;font-size:12px;line-height:16px;height:16px;color:#1a1d30;letter-spacing:-0.8063px;">171 %</div>
<div class="t" id="t27" style="left:131.90px;top:791.84px;font-size:12px;line-height:16px;height:16px;color:#1a1d30;letter-spacing:-0.1375px;">No issues found</div>
<div class="t" id="t28" style="left:35.90px;top:818.54px;font-size:12px;line-height:16px;height:16px;color:#ffffff;letter-spacing:-0.1768px;">Package Manager Console</div>
<div class="t" id="t29" style="left:38.40px;top:842.54px;font-size:12px;line-height:16px;height:16px;color:#1a1d30;letter-spacing:-0.2660px;">Package source:</div>
<div class="t" id="t30" style="left:133.90px;top:842.54px;font-size:12px;line-height:16px;height:16px;color:#1a1d30;letter-spacing:0.1646px;">nuget.org</div>
<div class="t" id="t31" style="left:345.60px;top:842.54px;font-size:12px;line-height:16px;height:16px;color:#1a1d30;letter-spacing:0.0426px;">Default project:</div>
<div class="t" id="t32" style="left:436.40px;top:842.54px;font-size:12px;line-height:16px;height:16px;color:#1a1d30;letter-spacing:-0.3981px;">DapperCRUDAPI</div>
<div class="t" id="t33" style="left:34.40px;top:974.14px;font-size:12px;line-height:16px;height:16px;color:#1a1d30;letter-spacing:-0.8063px;">171 %</div>
<div class="t" id="t34" style="left:36.80px;top:992.04px;font-size:12px;line-height:16px;height:16px;color:#1a1d30;letter-spacing:-0.1637px;">Package Manager Console</div>
<div class="t" id="t35" style="left:188.40px;top:992.04px;font-size:12px;line-height:16px;height:16px;color:#e3e8f6;letter-spacing:-0.2011px;">Error List ...</div>
<div class="t" id="t36" style="left:258.90px;top:992.04px;font-size:12px;line-height:16px;height:16px;color:#e3e8f6;letter-spacing:0.4448px;">Output</div>
<div class="t" id="t37" style="left:27.60px;top:1020.84px;font-size:12px;line-height:16px;height:16px;color:#ffffff;letter-spacing:-0.2079px;">Item(s) Saved</div>
<div class="t" id="t38" style="left:1121.40px;top:1020.84px;font-size:12px;line-height:16px;height:16px;color:#ffffff;letter-spacing:-0.1663px;">Ln 33</div>
<div class="t" id="t39" style="left:1213.40px;top:1020.84px;font-size:12px;line-height:16px;height:16px;color:#ffffff;letter-spacing:0.0021px;">Col 10</div>
<div class="t" id="t40" style="left:1305.90px;top:1020.84px;font-size:12px;line-height:16px;height:16px;color:#ffffff;letter-spacing:-0.1663px;">Ch 10</div>
<div class="t" id="t41" style="left:1441.90px;top:1020.84px;font-size:12px;line-height:16px;height:16px;color:#ffffff;letter-spacing:-0.2719px;">INS</div>
<div class="t" id="t42" style="left:1728.90px;top:1020.84px;font-size:12px;line-height:16px;height:16px;color:#ffffff;letter-spacing:0.0534px;">Add to Source Control</div>
<div class="t" id="t43" style="left:224.40px;top:108.39px;font-size:16.2px;line-height:22px;height:22px;color:#9a9a9a;letter-spacing:0.4346px;">0 references</div>
<div class="t" id="t44" style="left:224.40px;top:275.39px;font-size:16.2px;line-height:22px;height:22px;color:#9a9a9a;letter-spacing:0.4827px;">1 reference</div>
<div class="t" id="t45" style="left:224.40px;top:384.39px;font-size:16.2px;line-height:22px;height:22px;color:#9a9a9a;letter-spacing:0.4346px;">0 references</div>
<div class="t" id="t46" style="left:224.40px;top:697.39px;font-size:16.2px;line-height:22px;height:22px;color:#9a9a9a;letter-spacing:0.4346px;">0 references</div>
<svg style="left:172px;top:43px" width="13" height="20" viewBox="0 0 13 20"><path d="M0.7 0.8 V15.6 L4.1 12.5 L6.5 18.4 L9 17.3 L6.6 11.6 H11.4 Z" fill="#fff" stroke="#000" stroke-width="1.1" stroke-linejoin="round"/></svg>

</body>
</html>
